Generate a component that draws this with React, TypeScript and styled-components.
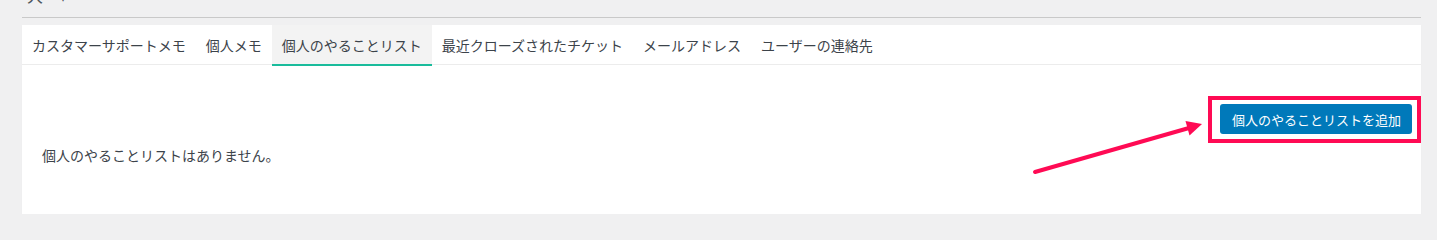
import React from "react";
import styled, { createGlobalStyle } from "styled-components";

const Global = createGlobalStyle`
  html, body { margin: 0; padding: 0; background: #f0f0f1; }
  body { font-family: "Noto Sans CJK JP", "Noto Sans", sans-serif; color: #3c434a; }
`;

const Page = styled.div`
  padding: 0 16px 0 22px;
`;

const Header = styled.div`
  height: 17px;
  border-bottom: 1px solid #c9c9c9;
  overflow: hidden;
  display: flex;
  gap: 16px;
  padding-left: 5px;
`;

const HeaderGlyph = styled.span`
  font-size: 16px;
  line-height: 16px;
  margin-top: -13px;
  color: #50575e;
`;

const Panel = styled.section`
  margin-top: 7px;
  background: #fff;
  box-shadow: 0 1px 1px rgba(0, 0, 0, 0.04);
  height: 189px;
  display: flex;
  flex-direction: column;
`;

const TabBar = styled.nav`
  display: flex;
  height: 39px;
  border-bottom: 1px solid #ececec;
`;

const Tab = styled.div<{ $active?: boolean }>`
  display: flex;
  align-items: center;
  padding: 0 10px;
  font-size: 14px;
  white-space: nowrap;
  color: #3c434a;
  background: ${(p) => (p.$active ? "#f3f3f3" : "transparent")};
  box-shadow: ${(p) => (p.$active ? "inset 0 -0px 0 #1abc9c" : "none")};
  position: relative;
  &::after {
    content: "";
    display: ${(p) => (p.$active ? "block" : "none")};
    position: absolute;
    left: 0;
    right: 0;
    bottom: -2px;
    height: 2px;
    background: #1abc9c;
  }
`;

const Content = styled.div`
  position: relative;
  flex: 1;
  display: flex;
  flex-direction: column;
  padding: 39px 9px 0 20px;
`;

const ButtonRow = styled.div`
  display: flex;
  justify-content: flex-end;
`;

const Highlight = styled.div`
  position: relative;
`;

const HighlightFrame = styled.div`
  position: absolute;
  left: -12px;
  right: -9px;
  top: -8px;
  bottom: -9px;
  border: 4px solid #ff0a54;
  pointer-events: none;
`;

const AddButton = styled.button`
  height: 30px;
  width: 192px;
  padding: 0 12px;
  border: none;
  border-radius: 3px;
  background: #0079ba;
  color: #fff;
  font-family: "Noto Sans CJK JP", "Noto Sans", sans-serif;
  font-size: 13px;
  white-space: nowrap;
  cursor: pointer;
`;

const EmptyText = styled.p`
  margin: 11px 0 0;
  font-size: 14px;
  line-height: 20px;
  color: #3c434a;
`;

const Arrow = styled.svg`
  position: absolute;
  left: 0;
  top: 0;
  overflow: visible;
  pointer-events: none;
`;

const tabs = [
  "カスタマーサポートメモ",
  "個人メモ",
  "個人のやることリスト",
  "最近クローズされたチケット",
  "メールアドレス",
  "ユーザーの連絡先",
];

export default function App() {
  return (
    <>
      <Global />
      <Page>
        <Header>
          <HeaderGlyph>大</HeaderGlyph>
          <HeaderGlyph>▾</HeaderGlyph>
        </Header>
        <Panel>
          <TabBar>
            {tabs.map((t, i) => (
              <Tab key={t} $active={i === 2}>
                {t}
              </Tab>
            ))}
          </TabBar>
          <Content>
            <ButtonRow>
              <Highlight>
                <AddButton>個人のやることリストを追加</AddButton>
                <HighlightFrame />
              </Highlight>
            </ButtonRow>
            <EmptyText>個人のやることリストはありません。</EmptyText>
            <Arrow width="1" height="1">
              <line
                x1="1013"
                y1="107"
                x2="1167"
                y2="63"
                stroke="#ff0a54"
                strokeWidth="4"
                strokeLinecap="round"
              />
              <polygon points="1180,59 1167.5,70.5 1163.5,56" fill="#ff0a54" />
            </Arrow>
          </Content>
        </Panel>
      </Page>
    </>
  );
}
